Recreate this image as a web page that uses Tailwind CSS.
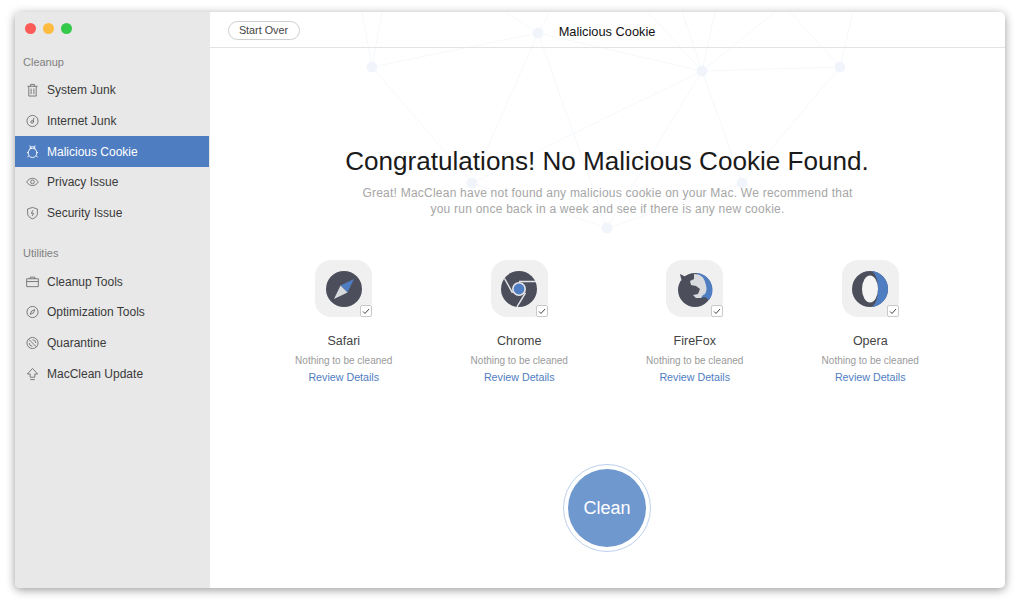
<!DOCTYPE html>
<html lang="en">
<head>
<meta charset="UTF-8" />
<title>MacClean</title>
<script src="https://cdn.jsdelivr.net/npm/@tailwindcss/browser@4"></script>
</head>
<body class="bg-white w-[1020px] h-[607px] overflow-hidden font-['Liberation_Sans',Arial,sans-serif]">
<div class="pt-[12px] pl-[15px]">
  <div class="relative w-[990px] h-[576px] flex rounded-[5px] overflow-hidden bg-white shadow-[0_2px_10px_rgba(0,0,0,0.4)]">

    <!-- Sidebar -->
    <aside class="w-[195px] shrink-0 bg-[#e8e8e8] text-[12px] text-[#3a3a3a]">
      <div class="flex gap-[7px] pl-[10px] pt-[11px] h-[42px]">
        <span class="w-[11px] h-[11px] rounded-full bg-[#fc5b57]"></span>
        <span class="w-[11px] h-[11px] rounded-full bg-[#fdbb40]"></span>
        <span class="w-[11px] h-[11px] rounded-full bg-[#35c94a]"></span>
      </div>
      <div class="pl-[8px] text-[11px] leading-[16px] text-[#808080] h-[21px]">Cleanup</div>
      <ul class="mr-[1px]">
        <li class="h-[30.7px] flex items-center pl-[11px] gap-[8px]">
          <svg class="w-[13px] h-[14px]" viewBox="0 0 14 14" fill="none" stroke="#666" stroke-width="0.9"><path d="M1.500 3h11M5 3V1h4v2M3 3v10.500h8V3M5.500 5.500v6M8.500 5.500v6"/></svg>
          <span>System Junk</span>
        </li>
        <li class="h-[30.7px] flex items-center pl-[11px] gap-[8px]">
          <svg class="w-[13px] h-[14px]" viewBox="0 0 14 14" fill="none" stroke="#666" stroke-width="0.9"><circle cx="7" cy="7" r="6"/><circle cx="6.600" cy="8" r="1.400"/><path d="M8 8V4.400l1-.4"/></svg>
          <span>Internet Junk</span>
        </li>
        <li class="h-[30.7px] flex items-center pl-[11px] gap-[8px] bg-[#4f7dc2] text-white">
          <svg class="w-[13px] h-[15px]" viewBox="0 0 14 15" fill="none" stroke="#fff" stroke-width="1"><ellipse cx="7" cy="9" rx="4.600" ry="5"/><path d="M4 5.200a3 3 0 0 1 6 0M4 1l1.600 2.400M10 1L8.400 3.400M1 8.500l1.500.5M13 8.500l-1.500.5M1.500 13.500l1.600-1.200M12.500 13.500l-1.600-1.200"/></svg>
          <span>Malicious Cookie</span>
        </li>
        <li class="h-[30.7px] flex items-center pl-[11px] gap-[8px]">
          <svg class="w-[13px] h-[14px]" viewBox="0 0 14 14" fill="none" stroke="#666" stroke-width="0.9"><path d="M0.700 7C2.500 4.200 4.600 3 7 3s4.500 1.200 6.300 4c-1.800 2.600-3.900 3.800-6.300 3.800S2.500 9.600.7 7z"/><circle cx="7" cy="6.900" r="2"/></svg>
          <span>Privacy Issue</span>
        </li>
        <li class="h-[30.7px] flex items-center pl-[11px] gap-[8px]">
          <svg class="w-[13px] h-[14px]" viewBox="0 0 14 14" fill="none" stroke="#666" stroke-width="0.9"><path d="M7 1l5.300 1.700v4.600c0 3-2.300 5-5.300 6-3-1-5.300-3-5.300-6V2.700z"/><path d="M7.500 4L5.800 7.400h2.400L6.500 10.400"/></svg>
          <span>Security Issue</span>
        </li>
      </ul>
      <div class="pl-[8px] mt-[17px] text-[11px] leading-[16px] text-[#808080] h-[21px]">Utilities</div>
      <ul class="mr-[1px]">
        <li class="h-[30.7px] flex items-center pl-[11px] gap-[8px]">
          <svg class="w-[13px] h-[14px]" viewBox="0 0 14 14" fill="none" stroke="#666" stroke-width="0.9"><path d="M.7 3.500h12.600v8.500H.7zM.7 6.500h12.600M4.500 3.500V1.800h5v1.700"/></svg>
          <span>Cleanup Tools</span>
        </li>
        <li class="h-[30.7px] flex items-center pl-[11px] gap-[8px]">
          <svg class="w-[13px] h-[14px]" viewBox="0 0 14 14" fill="none" stroke="#666" stroke-width="0.9"><circle cx="7" cy="7" r="6"/><path d="M4.500 9.500L6 6l3.500-1.500L8 8z"/></svg>
          <span>Optimization Tools</span>
        </li>
        <li class="h-[30.7px] flex items-center pl-[11px] gap-[8px]">
          <svg class="w-[13px] h-[14px]" viewBox="0 0 14 14" fill="none" stroke="#666" stroke-width="0.9"><circle cx="7" cy="7" r="6"/><path d="M2.800 2.800l8.400 8.400M7 3.500a3.500 3.500 0 0 1 3.500 3.500M3.500 7A3.500 3.500 0 0 0 7 10.500"/></svg>
          <span>Quarantine</span>
        </li>
        <li class="h-[30.7px] flex items-center pl-[11px] gap-[8px]">
          <svg class="w-[13px] h-[14px]" viewBox="0 0 14 14" fill="none" stroke="#666" stroke-width="0.9"><path d="M7 1L1.500 7H4.500v3.500h5V7h3zM4.500 13h5"/></svg>
          <span>MacClean Update</span>
        </li>
      </ul>
    </aside>

    <!-- Main -->
    <main class="relative flex-1 flex flex-col items-center">
      <!-- faint network backdrop, coordinates are relative to main -->
      <svg class="absolute left-0 top-0" width="795" height="240" viewBox="0 0 795 240" fill="none" stroke="#f5f8fc" stroke-width="1">
        <path d="M162 55L328 21L492 59L630 55M162 55L262 171L397 216L532 171L630 55M492 59L532 171M492 59L397 216M492 59L262 171M328 21L262 171M328 21L397 216M162 55L152 0M162 55L172 0M328 21L295 0M328 21L340 0M492 59L472 0M492 59L505 0M492 59L565 0M492 59L438 0M630 55L580 0M630 55L643 0"/>
        <g fill="#f1f5fb" stroke="none">
          <circle cx="162" cy="55" r="5.500"/><circle cx="328" cy="21" r="5.500"/><circle cx="492" cy="59" r="5.500"/><circle cx="630" cy="55" r="5.500"/><circle cx="262" cy="171" r="5.500"/><circle cx="532" cy="171" r="5.500"/><circle cx="397" cy="216" r="5.500"/>
        </g>
      </svg>

      <header class="relative w-full h-[36px] shrink-0 border-b border-[#e3e3e3] flex items-center justify-center">
        <button class="absolute left-[17.500px] top-[9px] w-[72px] h-[19px] rounded-full border border-[#cfcfcf] bg-white/60 text-[10.800px] leading-[15px] text-[#444]">Start Over</button>
        <span class="text-[12.800px] text-[#111] mt-[4px] -ml-[1px]">Malicious Cookie</span>
      </header>

      <h1 class="relative mt-[97px] -ml-[1px] text-[26.100px] leading-[32px] text-[#1a1a1a]">Congratulations! No Malicious Cookie Found.</h1>
      <p class="relative mt-[8px] w-[520px] text-center text-[12px] leading-[16px] text-[#a6a6a6] tracking-[0.23px]">Great! MacClean have not found any malicious cookie on your Mac. We recommend that<br />you run once back in a week and see if there is any new cookie.</p>

      <div class="relative mt-[43px] -ml-[1px] w-[702px] grid grid-cols-4">
        <div class="flex flex-col items-center">
          <div class="relative w-[57px] h-[57px] rounded-[16px] bg-[#f0f0f0] flex items-center justify-center">
            <svg width="36" height="36" viewBox="0 0 36 36"><circle cx="18" cy="18" r="18" fill="#4c4f5b"/><path d="M28 8L14.500 14.500L21.500 21.500z" fill="#4f7dc2"/><path d="M8 28L14.500 14.500L21.500 21.500z" fill="#d8dade"/></svg>
            <span class="absolute right-0 bottom-0 w-[12px] h-[12px] rounded-[2px] bg-white border border-[#c9c9c9] flex items-center justify-center"><svg width="8" height="7" viewBox="0 0 8 7" fill="none" stroke="#444" stroke-width="1"><path d="M1 3.500L3 5.500L7 1"/></svg></span>
          </div>
          <div class="mt-[17px] text-[12.500px] leading-[15px] text-[#444]">Safari</div>
          <div class="mt-[5px] text-[10px] leading-[14px] text-[#9a9a9a]">Nothing to be cleaned</div>
          <a class="mt-[2px] text-[10.700px] leading-[14px] text-[#4f7dc2]">Review Details</a>
        </div>
        <div class="flex flex-col items-center">
          <div class="relative w-[57px] h-[57px] rounded-[16px] bg-[#f0f0f0] flex items-center justify-center">
            <svg width="36" height="36" viewBox="0 0 36 36"><circle cx="18" cy="18" r="18" fill="#4c4f5b"/><path d="M18 10.500h17M11.500 21.800L3.500 7.500M24.500 21.800L16 35.800" stroke="#e4e5e8" stroke-width="1.500" fill="none"/><circle cx="18" cy="18" r="7" fill="#e4e5e8"/><circle cx="18" cy="18" r="5.400" fill="#4f7dc2"/></svg>
            <span class="absolute right-0 bottom-0 w-[12px] h-[12px] rounded-[2px] bg-white border border-[#c9c9c9] flex items-center justify-center"><svg width="8" height="7" viewBox="0 0 8 7" fill="none" stroke="#444" stroke-width="1"><path d="M1 3.500L3 5.500L7 1"/></svg></span>
          </div>
          <div class="mt-[17px] text-[12.500px] leading-[15px] text-[#444]">Chrome</div>
          <div class="mt-[5px] text-[10px] leading-[14px] text-[#9a9a9a]">Nothing to be cleaned</div>
          <a class="mt-[2px] text-[10.700px] leading-[14px] text-[#4f7dc2]">Review Details</a>
        </div>
        <div class="flex flex-col items-center">
          <div class="relative w-[57px] h-[57px] rounded-[16px] bg-[#f0f0f0] flex items-center justify-center">
            <svg width="36" height="36" viewBox="0 0 36 36"><circle cx="18" cy="19" r="17" fill="#4c4f5b"/><path d="M20 2a17 17 0 0 1 14 24l-2 3-4-3-5 1 3-6-5-9z" fill="#4f7dc2"/><path d="M8 6l-5-3 1 7zM17 3c6 0 10 3 11 8 2 5 2 9 0 12l-2 1-2 3h-5l-3-3 5-1 2-5-4-3-5-1-1-4 4-2z" fill="#d8dade"/><path d="M3 3l6 3-4 5z" fill="#4c4f5b"/></svg>
            <span class="absolute right-0 bottom-0 w-[12px] h-[12px] rounded-[2px] bg-white border border-[#c9c9c9] flex items-center justify-center"><svg width="8" height="7" viewBox="0 0 8 7" fill="none" stroke="#444" stroke-width="1"><path d="M1 3.500L3 5.500L7 1"/></svg></span>
          </div>
          <div class="mt-[17px] text-[12.500px] leading-[15px] text-[#444]">FireFox</div>
          <div class="mt-[5px] text-[10px] leading-[14px] text-[#9a9a9a]">Nothing to be cleaned</div>
          <a class="mt-[2px] text-[10.700px] leading-[14px] text-[#4f7dc2]">Review Details</a>
        </div>
        <div class="flex flex-col items-center">
          <div class="relative w-[57px] h-[57px] rounded-[16px] bg-[#f0f0f0] flex items-center justify-center">
            <svg width="36" height="36" viewBox="0 0 36 36"><circle cx="18" cy="18" r="18" fill="#4c4f5b"/><path d="M18 0a18 18 0 0 1 0 36c5 0 8-8 8-18S23 0 18 0z" fill="#4f7dc2"/><ellipse cx="18" cy="18" rx="8" ry="13.500" fill="#f4f4f4"/></svg>
            <span class="absolute right-0 bottom-0 w-[12px] h-[12px] rounded-[2px] bg-white border border-[#c9c9c9] flex items-center justify-center"><svg width="8" height="7" viewBox="0 0 8 7" fill="none" stroke="#444" stroke-width="1"><path d="M1 3.500L3 5.500L7 1"/></svg></span>
          </div>
          <div class="mt-[17px] text-[12.500px] leading-[15px] text-[#444]">Opera</div>
          <div class="mt-[5px] text-[10px] leading-[14px] text-[#9a9a9a]">Nothing to be cleaned</div>
          <a class="mt-[2px] text-[10.700px] leading-[14px] text-[#4f7dc2]">Review Details</a>
        </div>
      </div>

      <div class="relative mt-[80px] -ml-[1px] w-[88px] h-[88px] rounded-full border border-[#bcd0ec] flex items-center justify-center">
        <button class="w-[78px] h-[78px] rounded-full bg-[#6f98cf] text-white text-[18px]">Clean</button>
      </div>
    </main>
  </div>
</div>
</body>
</html>
